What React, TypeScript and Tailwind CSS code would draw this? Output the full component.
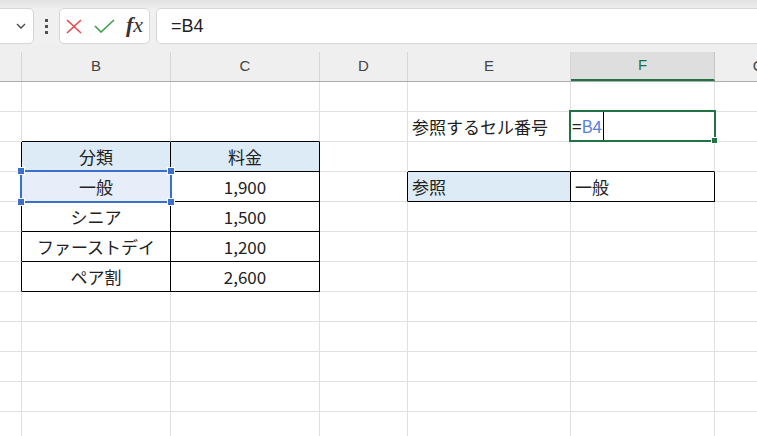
import React from 'react';

const FONT = '"Noto Sans CJK JP", "Liberation Sans", sans-serif';

type Cell = { text?: React.ReactNode; align?: 'left' | 'center'; bg?: string };

const cols = ['A', 'B', 'C', 'D', 'E', 'F', 'G'];

const cells: Record<string, Cell> = {
  E2: { text: '参照するセル番号', align: 'left' },
  B3: { text: '分類', align: 'center', bg: 'bg-[#ddebf7]' },
  C3: { text: '料金', align: 'center', bg: 'bg-[#ddebf7]' },
  B4: { text: '一般', align: 'center', bg: 'bg-[#e8eef9]' },
  C4: { text: '1,900', align: 'center' },
  E4: { text: '参照', align: 'left', bg: 'bg-[#ddebf7]' },
  F4: { text: '一般', align: 'left' },
  B5: { text: 'シニア', align: 'center' },
  C5: { text: '1,500', align: 'center' },
  B6: { text: 'ファーストデイ', align: 'center' },
  C6: { text: '1,200', align: 'center' },
  B7: { text: 'ペア割', align: 'center' },
  C7: { text: '2,600', align: 'center' },
};

// cells whose right / bottom edge carries the black table border
const blackRight = new Set(['A3', 'A4', 'A5', 'A6', 'A7', 'B3', 'B4', 'B5', 'B6', 'B7', 'C3', 'C4', 'C5', 'C6', 'C7', 'D4', 'E4', 'F4']);
const blackBottom = new Set(['B2', 'C2', 'B3', 'C3', 'B4', 'C4', 'B5', 'C5', 'B6', 'C6', 'B7', 'C7', 'E3', 'F3', 'E4', 'F4']);

const Toolbar: React.FC = () => (
  <div className="h-[44px] flex items-start bg-[#f0f0f0] relative">
    <div className="absolute top-0 left-0 right-0 h-[8px] bg-gradient-to-b from-[#e2e2e2] to-[#ececec]"></div>
    {/* name box */}
    <div className="relative mt-[8px] -ml-[10px] w-[44px] h-[36px] bg-white border border-[#d6d6d6] rounded-[5px] flex items-center justify-end pr-[6px]">
      <svg width="10" height="6" viewBox="0 0 10 6" className="mr-[1px]">
        <polyline points="1,1 5,5 9,1" fill="none" stroke="#444" strokeWidth="1.3" />
      </svg>
    </div>
    {/* dots */}
    <div className="relative mt-[19px] ml-[11px] w-[4px] flex flex-col gap-[3px]">
      <div className="w-[3px] h-[3px] bg-[#505050]"></div>
      <div className="w-[3px] h-[3px] bg-[#505050]"></div>
      <div className="w-[3px] h-[3px] bg-[#505050]"></div>
    </div>
    {/* cancel / enter / fx */}
    <div className="relative mt-[8px] ml-[10px] w-[91px] h-[36px] bg-white border border-[#d6d6d6] rounded-[5px] flex items-center pl-[6px]">
      <svg width="16" height="15" viewBox="0 0 16 15">
        <line x1="1" y1="1" x2="15" y2="14" stroke="#e5484d" strokeWidth="1.6" />
        <line x1="15" y1="1" x2="1" y2="14" stroke="#e5484d" strokeWidth="1.6" />
      </svg>
      <svg width="21" height="14" viewBox="0 0 21 14" className="ml-[12px]">
        <polyline points="1,7 7,13 20,1" fill="none" stroke="#3e9f50" strokeWidth="1.6" />
      </svg>
      <span className="ml-[11px] text-[22px] leading-none italic text-[#333] -mt-[3px]" style={{ fontFamily: '"Liberation Serif", serif' }}>
        <i className="font-bold">f</i>x
      </span>
    </div>
    {/* formula input */}
    <div className="relative mt-[8px] ml-[6px] flex-1 h-[36px] bg-white border border-[#d6d6d6] border-r-0 rounded-l-[5px] flex items-center pl-[14px]">
      <span className="text-[18px] text-[#222]" style={{ fontFamily: '"Liberation Sans", sans-serif' }}>=B4</span>
    </div>
  </div>
);

const ColumnHeaders: React.FC = () => (
  <div className="h-[38px] bg-[#efefef] border-b border-[#ababab] grid grid-cols-[22px_149px_149px_88px_163px_144px_88px] items-end">
    {cols.map((c) =>
      c === 'F' ? (
        <div key={c} className="h-[29px] bg-[#dedede] border-r border-[#c6c6c6] border-b-2 border-b-[#217346] flex items-center justify-center text-[15px] text-[#1e7145]" style={{ fontFamily: '"Liberation Sans", sans-serif' }}>
          {c}
        </div>
      ) : (
        <div key={c} className="h-[29px] border-r border-[#d6d6d6] flex items-center justify-center text-[15px] text-[#444]" style={{ fontFamily: '"Liberation Sans", sans-serif' }}>
          {c === 'A' ? '' : c}
        </div>
      )
    )}
  </div>
);

const Grid: React.FC = () => {
  const rows = Array.from({ length: 12 }, (_, i) => i + 1);
  return (
    <div className="relative grid grid-cols-[22px_149px_149px_88px_163px_144px_88px] auto-rows-[30px]" style={{ fontFamily: FONT }}>
      {rows.map((r) =>
        cols.map((c) => {
          const key = `${c}${r}`;
          const cell = cells[key];
          const right = blackRight.has(key) ? 'border-r-black' : 'border-r-[#e0e0e0]';
          const bottom = blackBottom.has(key) ? 'border-b-black' : 'border-b-[#e0e0e0]';
          const align = cell?.align === 'left' ? 'justify-start pl-[4px]' : 'justify-center';
          return (
            <div
              key={key}
              className={`border-r border-b ${right} ${bottom} ${cell?.bg ?? 'bg-white'} flex items-center ${align} text-[17px] text-[#222] whitespace-nowrap overflow-hidden`}
            >
              {cell?.text}
            </div>
          );
        })
      )}

      {/* selection of B4 */}
      <div className="absolute left-[20px] top-[88px] w-[152px] h-[33px] border-2 border-[#3b6fc9] pointer-events-none">
        <div className="absolute -left-[4px] -top-[4px] w-[6px] h-[6px] bg-[#3b6fc9] outline outline-1 outline-white"></div>
        <div className="absolute -right-[4px] -top-[4px] w-[6px] h-[6px] bg-[#3b6fc9] outline outline-1 outline-white"></div>
        <div className="absolute -left-[4px] -bottom-[4px] w-[6px] h-[6px] bg-[#3b6fc9] outline outline-1 outline-white"></div>
        <div className="absolute -right-[4px] -bottom-[4px] w-[6px] h-[6px] bg-[#3b6fc9] outline outline-1 outline-white"></div>
      </div>

      {/* active cell F2 in edit mode */}
      <div className="absolute left-[569px] top-[28px] w-[147px] h-[32px] border-2 border-[#217346] bg-white flex items-center pl-[1px] pointer-events-none">
        <span className="text-[17px] text-[#222]">=</span>
        <span className="text-[17px] text-[#5a7fdc]">B4</span>
        <span className="ml-[1px] w-[1px] h-[28px] bg-black"></span>
        <div className="absolute -right-[3px] -bottom-[3px] w-[5px] h-[5px] bg-[#217346] outline outline-1 outline-white"></div>
      </div>
    </div>
  );
};

const App: React.FC = () => (
  <div className="w-full h-screen overflow-hidden bg-white select-none">
    <Toolbar />
    <ColumnHeaders />
    <Grid />
  </div>
);

export default App;
